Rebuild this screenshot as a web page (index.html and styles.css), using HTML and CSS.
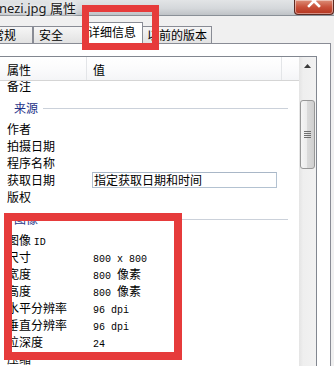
FILE: index.html
```html
<!DOCTYPE html>
<html lang="zh-CN">
<head>
<meta charset="utf-8">
<title>属性</title>
<link rel="stylesheet" href="styles.css">
</head>
<body>
<div class="win">
  <div class="titlebar">
    <span class="title">nezi.jpg 属性</span>
    <div class="close">
      <svg width="40" height="15" viewBox="0 0 40 15"><path d="M15 -4 L25 6 M25 -4 L15 6" stroke="#fff" stroke-width="2.6" stroke-linecap="square"/></svg>
    </div>
  </div>
  <div class="tabs">
    <div class="tab first">常规</div>
    <div class="tab">安全</div>
    <div class="tab active">详细信息</div>
    <div class="tab">以前的版本</div>
  </div>
  <div class="panel">
    <div class="listbox">
      <div class="list">
        <div class="header">
          <div class="hcol c1">属性</div>
          <div class="hcol c2">值</div>
          <div class="hcol c3"></div>
        </div>
        <div class="body">
          <div class="rows">
            <div class="row"><span class="k">备注</span><span class="v"></span></div>
            <div class="group"><span>来源</span><i class="gline"></i></div>
            <div class="row"><span class="k">作者</span><span class="v"></span></div>
            <div class="row"><span class="k">拍摄日期</span><span class="v"></span></div>
            <div class="row"><span class="k">程序名称</span><span class="v"></span></div>
            <div class="row edit"><span class="k">获取日期</span><span class="v"><span class="input">指定获取日期和时间</span></span></div>
            <div class="row"><span class="k">版权</span><span class="v"></span></div>
            <div class="group"><span>图像</span><i class="gline"></i></div>
            <div class="row"><span class="k">图像 <span class="m">ID</span></span><span class="v"></span></div>
            <div class="row"><span class="k">尺寸</span><span class="v"><span class="m">800 x 800</span></span></div>
            <div class="row"><span class="k">宽度</span><span class="v"><span class="m">800 </span>像素</span></div>
            <div class="row"><span class="k">高度</span><span class="v"><span class="m">800 </span>像素</span></div>
            <div class="row"><span class="k">水平分辨率</span><span class="v"><span class="m">96 dpi</span></span></div>
            <div class="row"><span class="k">垂直分辨率</span><span class="v"><span class="m">96 dpi</span></span></div>
            <div class="row"><span class="k">位深度</span><span class="v"><span class="m">24</span></span></div>
            <div class="row"><span class="k">压缩</span><span class="v"></span></div>
          </div>
        </div>
      </div>
      <div class="scrollbar">
        <div class="sb-btn">
          <svg width="7" height="4" viewBox="0 0 7 4"><path d="M0 4 L3.5 0 L7 4 Z" fill="#3a3a3a"/></svg>
        </div>
        <div class="thumb">
          <svg width="7" height="8" viewBox="0 0 7 8"><path d="M0 0.5 H7 M0 2.5 H7 M0 4.5 H7 M0 6.5 H7" stroke="#6f6f6f" stroke-width="1"/></svg>
        </div>
      </div>
    </div>
  </div>
  <div class="mark mark-tab"></div>
  <div class="mark mark-image"></div>
</div>
</body>
</html>
```

FILE: styles.css
```css
* { box-sizing: border-box; }
html, body { margin: 0; padding: 0; }
body {
  width: 334px;
  height: 366px;
  overflow: hidden;
  background: #f0f0f0;
  font-family: "Noto Sans CJK SC", "Noto Sans", sans-serif;
  font-size: 12px;
  color: #000;
}
.win {
  position: relative;
  width: 334px;
  height: 366px;
  overflow: hidden;
}

/* title bar */
.titlebar {
  height: 16px;
  display: flex;
  justify-content: space-between;
  align-items: flex-start;
  background: linear-gradient(#e2e4e6, #d5d8db 55%, #bfc3c7);
  border-bottom: 1px solid #8a9097;
}
.title {
  font-family: "Noto Sans", "Noto Sans CJK SC", sans-serif;
  font-size: 13px;
  line-height: 16px;
  color: #1a1a1a;
  margin-left: -1px;
  white-space: nowrap;
  text-shadow: 0 0 4px #fff, 0 0 6px #fff;
}
.close {
  width: 40px;
  height: 15px;
  background: linear-gradient(#dc8e78, #c9513a 50%, #b3341f);
  border: 1px solid #5b2a22;
  border-top: none;
  border-radius: 0 0 4px 4px;
  box-shadow: inset 0 0 0 1px rgba(255, 255, 255, 0.45);
  display: flex;
  justify-content: center;
  overflow: hidden;
}
.close svg { display: block; flex: none; }

/* tabs */
.tabs {
  display: flex;
  align-items: flex-end;
  height: 27px;
  margin-left: -14px;
  position: relative;
  z-index: 1;
}
.tab {
  height: 17px;
  min-width: 51px;
  padding: 0 4px 0 5px;
  border: 1px solid #898c95;
  border-bottom: none;
  background: linear-gradient(#f6f6f6, #ececec 50%, #e2e2e2);
  line-height: 15px;
  white-space: nowrap;
  flex: none;
}
.tab.first {
  min-width: 0;
  padding-right: 16px;
}
.tab.active {
  height: 22px;
  margin: 0 -2px -1px;
  padding: 1px 6px 5px 5px;
  background: #fff;
  position: relative;
  z-index: 2;
}

/* panel */
.panel {
  margin: 0 3px 0 -10px;
  height: 330px;
  background: #fff;
  border: 1px solid #898c95;
  padding: 12px 13px 0 8px;
}
.listbox {
  display: flex;
  height: 320px;
  border: 1px solid #828790;
  background: #fff;
}
.list {
  flex: 1;
  min-width: 0;
  display: flex;
  flex-direction: column;
}
.header {
  display: flex;
  height: 24px;
  flex: none;
  border-bottom: 1px solid #d5d5d5;
  background: linear-gradient(#ffffff, #fbfbfc 50%, #f4f5f7);
}
.hcol {
  padding-top: 2px;
  line-height: 21px;
  white-space: nowrap;
}
.c1 { width: 87px; padding-left: 7px; border-right: 1px solid #e3e5e8; }
.c2 { width: 195px; padding-left: 6px; border-right: 1px solid #e3e5e8; }
.c3 { flex: 1; }

.body {
  flex: 1;
  overflow: hidden;
}
.rows { margin-top: -4px; }
.row {
  display: flex;
  height: 17px;
  line-height: 17px;
  white-space: nowrap;
}
.k {
  width: 87px;
  flex: none;
  padding-left: 7px;
}
.v { padding-left: 6px; }
.m {
  font-family: "Liberation Mono", monospace;
  font-size: 10px;
}
.group {
  display: flex;
  align-items: center;
  height: 26px;
  padding-left: 14px;
  color: #1e3287;
}
.gline {
  flex: 1;
  height: 1px;
  background: #cbd1da;
  margin: 2px 11px 0 5px;
}
.row.edit .v { padding-left: 5px; }
.input {
  display: block;
  width: 185px;
  height: 16px;
  margin-top: 1px;
  border: 1px solid #b3c2d1;
  border-top-color: #a9b7c7;
  line-height: 14px;
  padding-left: 1px;
}

/* scrollbar */
.scrollbar {
  width: 17px;
  flex: none;
  background: linear-gradient(to right, #e4e4e4, #efefef 25%, #f2f2f2);
  display: flex;
  flex-direction: column;
  align-items: center;
}
.sb-btn {
  width: 17px;
  height: 17px;
  display: flex;
  justify-content: center;
  align-items: center;
}
.sb-btn svg { display: block; }
.thumb {
  width: 15px;
  height: 69px;
  margin-top: 26px;
  border: 1px solid #979797;
  border-radius: 3px;
  background: linear-gradient(to right, #f5f5f5, #ebebeb 50%, #dadada 50%, #d0d0d0);
  display: flex;
  justify-content: center;
  align-items: center;
}
.thumb svg { display: block; }

/* red annotation frames */
.mark {
  position: absolute;
  border-style: solid;
  border-color: #e63b3b;
  z-index: 5;
  pointer-events: none;
}
.mark-tab {
  left: 82px;
  top: 5px;
  width: 77px;
  height: 45px;
  border-width: 7px;
}
.mark-image {
  left: 4px;
  top: 213px;
  width: 178px;
  height: 147px;
  border-width: 8px;
}
```
